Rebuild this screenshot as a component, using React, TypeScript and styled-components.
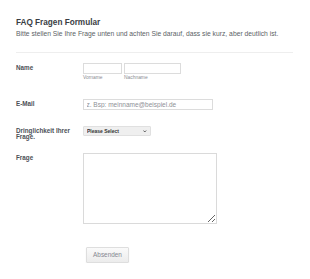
import React from 'react'
import styled, { createGlobalStyle } from 'styled-components';

const GlobalStyle = createGlobalStyle`
    html, body {
        margin: 0;
        padding: 0;
        background: #ffffff;
        font-family: "Liberation Sans", Arial, sans-serif;
    }
`;

function App() {
    return (
        <>
            <GlobalStyle />
            <CustomForm onSubmit={(e) => e.preventDefault()}>
                <CustomHeader>
                    <CustomTitle>FAQ Fragen Formular</CustomTitle>
                    <CustomSubtitle>Bitte stellen Sie Ihre Frage unten und achten Sie darauf, dass sie kurz, aber deutlich ist.</CustomSubtitle>
                </CustomHeader>
                <CustomDivider />
                <CustomList>
                    <CustomRow $space={18}>
                        <CustomLabel>Name</CustomLabel>
                        <CustomFieldGroup>
                            <CustomSubField>
                                <CustomInput $width={39} $height={10.5} />
                                <CustomSubLabel>Vorname</CustomSubLabel>
                            </CustomSubField>
                            <CustomSubField>
                                <CustomInput $width={57} $height={10.5} />
                                <CustomSubLabel>Nachname</CustomSubLabel>
                            </CustomSubField>
                        </CustomFieldGroup>
                    </CustomRow>
                    <CustomRow $space={16}>
                        <CustomLabel>E-Mail</CustomLabel>
                        <CustomInput $width={130} $height={11} placeholder="z. Bsp: meinname@beispiel.de" />
                    </CustomRow>
                    <CustomRow $space={12}>
                        <CustomLabel>Dringlichkeit Ihrer Frage.</CustomLabel>
                        <CustomSelectWrap>
                            <CustomSelect defaultValue="">
                                <option value="">Please Select</option>
                                <option value="niedrig">Niedrig</option>
                                <option value="mittel">Mittel</option>
                                <option value="hoch">Hoch</option>
                            </CustomSelect>
                            <CustomChevron viewBox="0 0 8 6">
                                <path d="M1 1.2 L4 4.4 L7 1.2" fill="none" stroke="#3a3a3a" strokeWidth="1.8" />
                            </CustomChevron>
                        </CustomSelectWrap>
                    </CustomRow>
                    <CustomRow $space={23}>
                        <CustomLabel>Frage</CustomLabel>
                        <CustomTextarea />
                    </CustomRow>
                    <CustomRow $space={0}>
                        <span />
                        <CustomButton type="submit">Absenden</CustomButton>
                    </CustomRow>
                </CustomList>
            </CustomForm>
        </>
    )
};

const CustomForm = styled('form')(() => {
    return {
        width: 277,
        padding: '18px 0 0 16px',
    }
});
const CustomHeader = styled('div')(() => {
    return {
        display: 'flex',
        flexDirection: 'column',
        gap: 2,
    }
});
const CustomTitle = styled('h2')(() => {
    return {
        margin: 0,
        fontSize: 8.2,
        lineHeight: '10px',
        fontWeight: 700,
        color: '#3a3d44',
    }
});
const CustomSubtitle = styled('p')(() => {
    return {
        margin: 0,
        fontSize: 6.75,
        lineHeight: '8px',
        color: '#5c5f66',
        whiteSpace: 'nowrap',
    }
});
const CustomDivider = styled('hr')(() => {
    return {
        margin: '14px 0 10px',
        border: 0,
        borderTop: '1px solid #eeeeee',
        height: 0,
    }
});
const CustomList = styled('div')(() => {
    return {
        display: 'flex',
        flexDirection: 'column',
    }
});
const CustomRow = styled('div')<{ $space: number }>((props) => {
    return {
        display: 'grid',
        gridTemplateColumns: '67px 1fr',
        alignItems: 'start',
        paddingBottom: props.$space,
    }
});
const CustomLabel = styled('label')(() => {
    return {
        width: 60,
        paddingTop: 2,
        fontSize: 6.3,
        lineHeight: '6.5px',
        fontWeight: 700,
        color: '#4c4f56',
    }
});
const CustomFieldGroup = styled('div')(() => {
    return {
        display: 'flex',
        gap: 2,
    }
});
const CustomSubField = styled('div')(() => {
    return {
        display: 'flex',
        flexDirection: 'column',
    }
});
const CustomSubLabel = styled('span')(() => {
    return {
        fontSize: 4.9,
        lineHeight: '7px',
        color: '#8a8d93',
    }
});
const CustomInput = styled('input')<{ $width: number, $height: number }>((props) => {
    return {
        boxSizing: 'border-box',
        width: props.$width,
        height: props.$height,
        margin: 0,
        padding: '0 2.5px',
        border: '1px solid #dcdcdc',
        borderRadius: 0,
        fontFamily: '"Liberation Sans", Arial, sans-serif',
        fontSize: 6.5,
        color: '#333',
        outline: 'none',
        '&::placeholder': {
            color: '#8e9096',
        },
    }
});
const CustomSelectWrap = styled('div')(() => {
    return {
        position: 'relative',
        width: 68,
        height: 10,
        marginTop: 0.5,
    }
});
const CustomSelect = styled('select')(() => {
    return {
        appearance: 'none',
        display: 'block',
        boxSizing: 'border-box',
        width: 68,
        height: 10,
        margin: 0,
        padding: '0 3px',
        border: '1px solid #e0e0e0',
        borderRadius: 1,
        background: '#efefef',
        fontFamily: '"Liberation Sans", Arial, sans-serif',
        fontSize: 5,
        lineHeight: '8px',
        fontWeight: 700,
        color: '#333',
        outline: 'none',
    }
});
const CustomChevron = styled('svg')(() => {
    return {
        position: 'absolute',
        right: 4,
        top: 3.8,
        width: 3.6,
        height: 2.7,
        pointerEvents: 'none',
    }
});
const CustomTextarea = styled('textarea')(() => {
    return {
        boxSizing: 'border-box',
        display: 'block',
        width: 134,
        height: 71,
        margin: 0,
        padding: 2,
        border: '1px solid #dadada',
        borderRadius: 0,
        fontFamily: '"Liberation Sans", Arial, sans-serif',
        fontSize: 6.5,
        outline: 'none',
    }
});
const CustomButton = styled('button')(() => {
    return {
        boxSizing: 'border-box',
        width: 43,
        height: 16,
        marginLeft: 3,
        padding: 0,
        border: '1px solid #dedede',
        borderRadius: 1,
        background: 'linear-gradient(#fafafa, #ececec)',
        boxShadow: '0 1px 1px rgba(0,0,0,0.12)',
        fontFamily: '"Liberation Sans", Arial, sans-serif',
        fontSize: 6.4,
        color: '#858891',
        cursor: 'pointer',
    }
});

export default App;
